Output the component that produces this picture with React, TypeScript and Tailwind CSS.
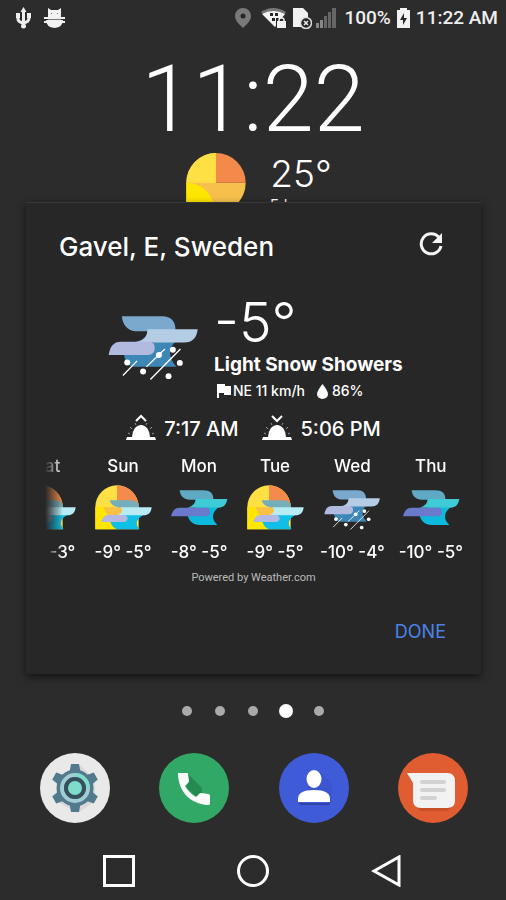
import { useState } from 'react';

const BackgroundSun = () => (
  <svg className="h-[60px] w-[60px]" viewBox="170 293 180 180">
    <path d="M171 472V382a89 89 0 0 1 89-89v89h89a89 89 0 0 1-89 90z" fill="#f7c04c" />
    <path d="M171 382a89 89 0 0 1 89-89v89z" fill="#fee045" />
    <path d="M260 293a89 89 0 0 1 89 89h-89z" fill="#f38a4a" />
    <path d="M171 382c45 0 80 30 89 90h-89z" fill="#ffe600" />
  </svg>
);

const SnowIcon = ({ className }: { className: string }) => (
  <svg className={className} viewBox="36 72 272 198">
    <path d="M84 186H172V152H240C218 170 218 200 243 228H118C98 228 86 212 84 186Z" fill="#3d86b6" />
    <path d="M78 75H200C226 75 240 90 240 116L160 154H112C140 148 155 138 155 120H118C94 118 80 100 78 75Z" fill="#7aa9cd" />
    <path d="M155 114H307C304 140 292 154 266 154H124C146 148 156 134 155 114Z" fill="#b4cde5" />
    <path d="M38 192C42 166 52 152 76 152H162C174 152 177 162 177 172C177 184 170 192 156 192Z" fill="#b3bae0" />
    <g stroke="#fff" strokeWidth="4">
      <path d="M81 254L124 210M152 228L208 174M164 266L255 174" />
    </g>
    <g fill="#fff">
      <circle cx="94" cy="215" r="9" />
      <circle cx="142" cy="242" r="9" />
      <circle cx="190" cy="192" r="9" />
      <circle cx="232" cy="176" r="9" />
      <circle cx="253" cy="216" r="9" />
      <circle cx="219" cy="256" r="9" />
    </g>
  </svg>
);

const CloudIcon = () => (
  <svg className="h-12 w-[60px]" viewBox="418 104 180 144">
    <path d="M474 198L500 174H567C546 190 544 208 563 227H510C490 227 478 216 474 198Z" fill="#0db9dd" />
    <path d="M497 149H593C590 166 582 175 566 175H474C490 170 498 162 497 149Z" fill="#3ecbd6" />
    <path d="M450 123H520C542 123 551 132 551 149H497V151H478C460 149 452 140 450 123Z" fill="#5fa9c4" />
    <path d="M424 201C428 184 436 175 450 175H532C544 178 544 198 532 201Z" fill="#6a79cb" />
  </svg>
);

const SunCloudIcon = () => (
  <svg className="h-12 w-[60px]" viewBox="190 104 180 144">
    <path d="M197 240V173a65 65 0 0 1 130 0V240z" fill="#fee045" />
    <path d="M262 108a65 65 0 0 1 65 65h-65z" fill="#f58a4d" />
    <path d="M197 173H240C262 190 266 220 262 240H197Z" fill="#ffe600" />
    <path d="M220 174H300V198H234Z" fill="#f8c145" />
    <path d="M240 153H302C322 153 328 164 328 176H286C262 176 244 170 240 153Z" fill="#74aebb" />
    <path d="M262 197H342C318 208 316 226 330 240H262C252 236 246 230 242 216H290Z" fill="#10bfe6" />
    <path d="M272 174H366C364 190 356 198 342 198H262C276 192 282 184 272 174Z" fill="#b8ecf5" />
    <path d="M215 218C218 204 226 197 238 197H282C298 198 298 216 282 218Z" fill="#b3b9e2" />
  </svg>
);

const HorizonIcon = ({ setting }: { setting?: boolean }) => (
  <svg className="h-8 w-[30px]" viewBox="0 0 30 32">
    <path d={setting ? 'M10 3l5 5 5-5' : 'M10 8l5-5 5 5'} fill="none" stroke="#fff" strokeWidth="2" />
    <path d="M6 24a9 12 0 0 1 18 0z" fill="#fff" />
    <path d="M1 24h28l1 3H0z" fill="#fff" />
    <path d="M4 21l-2-1M6 16l-2-2M10 12l-1-2M20 12l1-2M24 16l2-2M26 21l2-1" stroke="#999" strokeWidth="1" />
  </svg>
);

const StatusBar = () => (
  <header className="flex h-9 items-center pl-[15px] pr-2 font-['Roboto','Noto_Sans',sans-serif] text-[19px] font-medium text-[#eee]">
    <svg className="h-[22px] w-[17px]" viewBox="0 0 17 22" fill="none" stroke="#eee" strokeWidth="3">
      <path d="M8.500 3v16M3 9v3q0 3 5.500 4Q14 15 14 11V8" />
      <path d="M8.500 0l3 5h-6zM1 6h4v5H1zM12 6h4v5h-4z" fill="#eee" stroke="none" />
      <circle cx="8.500" cy="19" r="2.500" fill="#eee" stroke="none" />
    </svg>
    <svg className="ml-3 h-[22px] w-[21px]" viewBox="0 0 21 22">
      <path d="M4 1l3 2h7l3-2v9H4zM0 10h21v2H0z" fill="#f2f2f2" />
      <path d="M2 13h17q0 7-8.500 8Q2 20 2 13zM0 14h21v2H0z" fill="#f2f2f2" />
      <path d="M7 6h1v1H7zM13 6h1v1h-1zM4 12h13v1H4z" fill="#777" />
    </svg>
    <div className="ml-auto flex items-center">
      <svg className="h-5 w-4" viewBox="0 0 16 20">
        <path d="M8 0a8 8 0 0 1 8 8c0 5-5 9-8 12C5 17 0 13 0 8a8 8 0 0 1 8-8z" fill="#797979" />
        <circle cx="8" cy="8" r="2.500" fill="#262626" />
      </svg>
      <svg className="ml-2.5 h-5 w-[26px]" viewBox="0 0 26 20">
        <path d="M0 4Q12-4 25 4L14 19z" fill="#777" />
        <path d="M1 6Q12 0 24 6L14 19z" fill="#f2f2f2" />
        <path d="M9 5h3v3H9zM14 5h3v3h-3zM11 10h3v3h-3z" fill="#262626" />
        <path d="M15 10h11v10H15z" fill="#262626" />
        <path d="M16 13h9v7h-9z" fill="#f2f2f2" />
        <path d="M18 13v-1q0-2 2.500-2t2.500 2v1" fill="none" stroke="#f2f2f2" strokeWidth="1.500" />
      </svg>
      <svg className="ml-1.5 h-[22px] w-[19px]" viewBox="0 0 19 22">
        <path d="M0 1h10l5 5v14H0z" fill="#f2f2f2" />
        <circle cx="13" cy="16" r="5.500" fill="#262626" stroke="#ddd" strokeWidth="1.500" />
        <path d="M11 14l4 4M15 14l-4 4" stroke="#eee" strokeWidth="1.500" />
      </svg>
      <svg className="ml-1 h-5 w-5" viewBox="0 0 20 20">
        <path d="M0 15h3v5H0zM4 12h3v8H4z" fill="#888" />
        <path d="M8 8h3v12H8zM12 4h3v16h-3zM16 0h4v20h-4z" fill="#666" />
      </svg>
      <span className="ml-2">100%</span>
      <svg className="ml-1.5 h-5 w-[13px]" viewBox="0 0 13 20">
        <path d="M3 0h7v2h3v18H0V2h3z" fill="#f2f2f2" />
        <path d="M7 5L3 12h3v5l4-7H7z" fill="#262626" />
      </svg>
      <span className="ml-1.5">11:22 AM</span>
    </div>
  </header>
);

const forecast = [
  { day: 'Sat', low: '-8°', high: '-3°', icon: <SunCloudIcon /> },
  { day: 'Sun', low: '-9°', high: '-5°', icon: <SunCloudIcon /> },
  { day: 'Mon', low: '-8°', high: '-5°', icon: <CloudIcon /> },
  { day: 'Tue', low: '-9°', high: '-5°', icon: <SunCloudIcon /> },
  { day: 'Wed', low: '-10°', high: '-4°', icon: <SnowIcon className="h-12 w-14 pt-1" /> },
  { day: 'Thu', low: '-10°', high: '-5°', icon: <CloudIcon /> },
];

const apps = [
  {
    name: 'Settings',
    color: 'bg-[#e9e9e9]',
    art: (
      <svg viewBox="0 0 70 70">
        <path d="M40 12L55 27V48L38 60L16 48z" fill="#d8d8d8" />
        <g fill="#517a8c">
          <path id="tooth" d="M31 11h8l2 11H29zM31 59h8l2-11H29z" />
          <use href="#tooth" transform="rotate(60 35 35)" />
          <use href="#tooth" transform="rotate(120 35 35)" />
          <circle cx="35" cy="35" r="18.500" />
        </g>
        <circle cx="35" cy="35" r="13" fill="none" stroke="#a3cdd4" strokeWidth="4" />
        <path d="M35 22a13 13 0 0 1 13 13" fill="none" stroke="#7fdcca" strokeWidth="4" />
        <circle cx="35" cy="35" r="9" fill="#7fdcca" stroke="#36515d" strokeWidth="4" />
      </svg>
    ),
  },
  {
    name: 'Phone',
    color: 'bg-[#32a866]',
    art: (
      <svg viewBox="0 0 70 70">
        <path d="M29 21L43 35v7l-5 2-10-9z" fill="#238a50" />
        <path d="M19 20h9q1 0 1 1l1 7q0 1-1 2l-3 3q4 7 11 11l3-3q1-1 2-1l7 1q2 0 2 2v8q0 1-2 1C31 51 19 38 19 20z" fill="#fafafa" />
      </svg>
    ),
  },
  {
    name: 'Contacts',
    color: 'bg-[#3f5bd8]',
    art: (
      <svg viewBox="0 0 70 70">
        <path d="M39 18l14 13v18H20z" fill="#3851c4" opacity=".5" />
        <path d="M19 50h32v2H22z" fill="#2c43a8" />
        <ellipse cx="35" cy="26" rx="7.500" ry="9" fill="#fff" />
        <path d="M19 49v-3q0-9 16-9t16 9v3z" fill="#fff" />
      </svg>
    ),
  },
  {
    name: 'Messages',
    color: 'bg-[#e05c31]',
    art: (
      <svg viewBox="0 0 70 70">
        <path d="M18 52h37l-5 6H22z" fill="#c94f29" />
        <path d="M9 20h40q8 0 8 8v20q0 7-8 7H23q-8 0-8-8V30z" fill="#f2f2f2" />
        <path d="M24 29h22M24 37h22M24 45h13" stroke="#d2d2d2" strokeWidth="4" strokeLinecap="round" />
      </svg>
    ),
  },
];

export default function App() {
  const [activePage, setActivePage] = useState(3);

  return (
    <div className="flex min-h-screen flex-col overflow-x-hidden bg-[#2c2c2c] font-['Inter','Noto_Sans',sans-serif] text-white">
      <StatusBar />

      <section className="flex h-[166px] flex-col items-center overflow-hidden">
        <time className="mt-4 font-['Roboto','Noto_Sans',sans-serif] text-[92px] font-light leading-[96px]">11:22</time>
        <div className="mt-[5px] flex gap-6 pl-3">
          <BackgroundSun />
          <div>
            <p className="text-[37px] font-light leading-[42px]">25°</p>
            <p className="text-sm leading-5">Ed.</p>
          </div>
        </div>
      </section>

      <main className="ml-[26px] mr-[25px] border-t border-[#363636] bg-[#272727] pb-[26px] shadow-[0_3px_8px_rgba(0,0,0,0.55)]">
        <div className="flex items-center justify-between pl-[33px] pr-9 pt-6">
          <h1 className="text-[26px] font-medium leading-10">Gavel, E, Sweden</h1>
          <button aria-label="Refresh" className="p-0.5 pb-2">
            <svg className="h-6 w-6" viewBox="0 0 24 24" fill="none" stroke="#f4f4f4" strokeWidth="3">
              <path d="M20 5.500A10 10 0 1 0 22 14" />
              <path d="M23 1v10H13z" fill="#f4f4f4" stroke="none" />
            </svg>
          </button>
        </div>

        <section className="mt-6 flex pl-[82px]">
          <SnowIcon className="mt-6 h-[66px] w-[90px]" />
          <div className="ml-4">
            <p className="text-[55px] font-light leading-[62px]">-5°</p>
            <h2 className="text-[19px] font-bold leading-6">Light Snow Showers</h2>
            <p className="flex items-center pl-[3px] pt-1 text-sm font-medium leading-5">
              <svg className="mr-0.5 h-[14px] w-[14px]" viewBox="0 0 14 14">
                <path d="M0 0h8v2h6v9H7V9H2v5H0z" fill="#fff" />
              </svg>
              NE 11 km/h
              <svg className="ml-3 mr-1 h-[15px] w-[11px]" viewBox="0 0 11 15">
                <path d="M5.500 0q5.500 7 5.500 10a5.500 5 0 0 1-11 0q0-3 5.500-10z" fill="#fff" />
              </svg>
              86%
            </p>
          </div>
        </section>

        <section className="mt-3 flex items-center justify-center gap-6 text-xl font-medium leading-8">
          <p className="flex items-center gap-2">
            <HorizonIcon />
            7:17 AM
          </p>
          <p className="flex items-center gap-2">
            <HorizonIcon setting />
            5:06 PM
          </p>
        </section>

        <ul className="ml-[19px] mr-[11px] mt-[9px] flex justify-end overflow-hidden text-[17px] font-medium [mask-image:linear-gradient(to_right,transparent,black_18px)]">
          {forecast.map((f) => (
            <li key={f.day} className="flex min-w-[76px] shrink-0 flex-col items-center px-[7px]">
              <span className="leading-6">{f.day}</span>
              <span className="mt-1.5">{f.icon}</span>
              <span className="mt-2 whitespace-nowrap leading-6">
                {f.low} {f.high}
              </span>
            </li>
          ))}
        </ul>
        <p className="mt-1 text-center font-['Roboto','Noto_Sans',sans-serif] text-[11px] leading-5 text-[#bbb]">
          Powered by Weather.com
        </p>

        <div className="mt-7 flex justify-end pr-[35px]">
          <button className="text-lg leading-8 text-[#4a83e8]">DONE</button>
        </div>
      </main>

      <nav aria-label="Home pages" className="mt-7 flex justify-center">
        {[0, 1, 2, 3, 4].map((page) => (
          <button
            key={page}
            aria-label={`Page ${page + 1}`}
            onClick={() => setActivePage(page)}
            className="flex h-[18px] w-[33px] items-center justify-center"
          >
            <span className={page === activePage ? 'h-3.5 w-3.5 rounded-full bg-white' : 'h-2.5 w-2.5 rounded-full bg-[#aaa]'} />
          </button>
        ))}
      </nav>

      <nav aria-label="Dock" className="mt-[33px] flex justify-between pl-10 pr-[38px]">
        {apps.map((app) => (
          <button key={app.name} aria-label={app.name} className={`h-[70px] w-[70px] overflow-hidden rounded-full ${app.color}`}>
            {app.art}
          </button>
        ))}
      </nav>

      <nav aria-label="System" className="mt-8 flex items-center justify-center gap-[102px] pb-3">
        <button aria-label="Recent apps">
          <svg className="h-8 w-8" viewBox="0 0 32 32" fill="none" stroke="#fff" strokeWidth="3">
            <path d="M1.500 1.500h29v29h-29z" />
          </svg>
        </button>
        <button aria-label="Home">
          <svg className="h-8 w-8" viewBox="0 0 32 32" fill="none" stroke="#fff" strokeWidth="3">
            <circle cx="16" cy="16" r="14.500" />
          </svg>
        </button>
        <button aria-label="Back">
          <svg className="h-8 w-8" viewBox="0 0 32 32" fill="none" stroke="#fff" strokeWidth="3">
            <path d="M28 2v28L3 16z" />
          </svg>
        </button>
      </nav>
    </div>
  );
}
